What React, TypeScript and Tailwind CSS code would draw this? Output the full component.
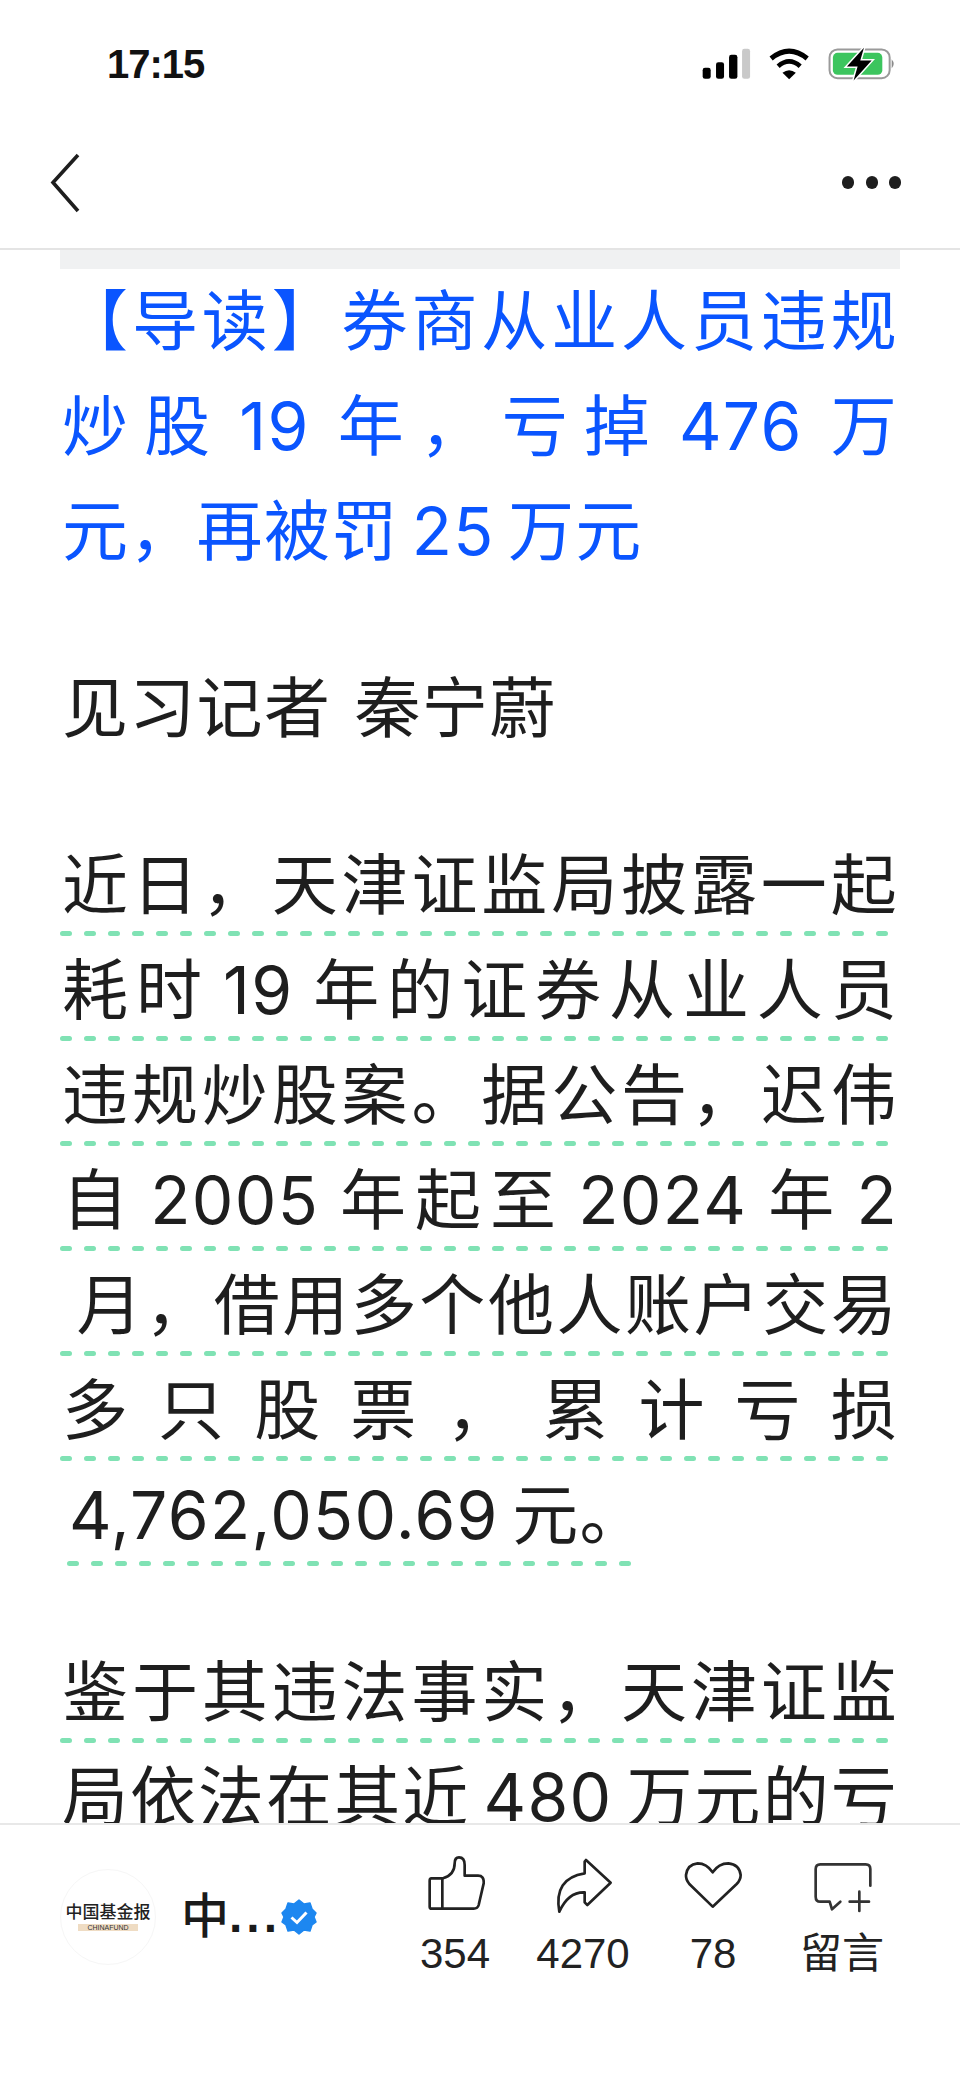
const fontStack = {
  fontFamily: '"Liberation Sans", "Noto Sans CJK SC", sans-serif',
};

type LineProps = {
  text: string;
  blue?: boolean;
  dashed?: boolean;
  last?: boolean;
  indent?: boolean;
};

function Line({ text, blue, dashed, last, indent }: LineProps) {
  return (
    <div className={indent ? "w-[570px] ml-[7px]" : last ? "w-fit" : "w-full"}>
      <div
        className={`h-[96px] font-['Inter','Noto_Sans_CJK_SC',sans-serif] text-[66px] leading-[100px] tracking-[1.3px] whitespace-nowrap ${
          blue ? "text-[#0a55ff]" : "text-[#1e1e1e]"
        } ${last ? "text-left" : "text-justify [text-align-last:justify]"}`}
      >
        {text}
      </div>
      <div className="h-[9px]">
        {dashed && (
          <svg className="block -ml-[2px] w-[calc(100%+2px)] h-[5px]">
            <line
              x1="0"
              y1="2.5"
              x2="100%"
              y2="2.5"
              stroke="#80e2b4"
              strokeWidth="5"
              strokeDasharray="7 17"
              strokeLinecap="round"
              transform="translate(2.5 0)"
            />
          </svg>
        )}
      </div>
    </div>
  );
}

function StatusIcons() {
  return (
    <svg width="197" height="37" viewBox="120 50 590 110">
      <rect x="128" y="112" width="24" height="33" rx="7" fill="#000" />
      <rect x="168" y="95" width="24" height="50" rx="7" fill="#000" />
      <rect x="207" y="73" width="25" height="72" rx="7" fill="#000" />
      <rect x="246" y="55" width="24" height="90" rx="7" fill="#c9c9c9" />
      <path d="M333 84 Q387 40 441 84" fill="none" stroke="#000" strokeWidth="15" />
      <path d="M354 107 Q387 78 420 107" fill="none" stroke="#000" strokeWidth="14" />
      <path d="M387 146 L367 127 Q387 112 407 127 Z" fill="#000" />
      <rect x="508" y="57" width="180" height="86" rx="24" fill="none" stroke="#9a9a9a" strokeWidth="6" />
      <rect x="518" y="67" width="148" height="66" rx="14" fill="#3cc55e" />
      <path d="M694 86 Q706 100 694 114 Z" fill="#8a8a8a" />
      <path
        d="M611 52 L560 108 H592 L580 150 L634 90 H600 Z"
        fill="#000"
        stroke="#fff"
        strokeWidth="9"
        paintOrder="stroke"
      />
    </svg>
  );
}

function ThumbIcon() {
  return (
    <svg width="60" height="60" viewBox="76 40 180 180" fill="none" stroke="#222" strokeWidth="8" strokeLinejoin="round">
      <path d="M130 110 H95 Q90 110 90 117 V195 Q90 201 96 201 H222 Q234 201 237 190 L252 125 Q254 102 235 102 H195 V70 Q195 47 178 47 Q165 47 165 65 Q165 100 130 110 Z" />
      <path d="M128 110 V201" />
    </svg>
  );
}

function ShareIcon() {
  return (
    <svg width="60" height="60" viewBox="459 40 180 180" fill="none" stroke="#222" strokeWidth="8" strokeLinejoin="round">
      <path d="M558 55 L632 123 L562 190 L554 182 V152 Q505 150 478 210 Q460 110 554 95 V60 Z" />
    </svg>
  );
}

function HeartIcon() {
  return (
    <svg width="60" height="60" viewBox="849 40 180 180" fill="none" stroke="#222" strokeWidth="8" strokeLinejoin="round">
      <path d="M938 195 L868 127 Q857 113 858 100 Q862 68 893 65 Q920 65 938 92 Q956 65 985 65 Q1018 68 1022 100 Q1022 115 1010 127 Z" />
    </svg>
  );
}

function CommentIcon() {
  return (
    <svg width="60" height="60" viewBox="1237 40 180 180" fill="none" stroke="#333" strokeWidth="8" strokeLinecap="round" strokeLinejoin="round">
      <path d="M1412 132 V82 Q1412 68 1398 68 H1262 Q1248 68 1248 82 V165 Q1248 180 1262 180 H1290 L1297 203 L1322 180" />
      <path d="M1379 150 V208 M1350 180 H1408" />
    </svg>
  );
}

function VerifiedBadge() {
  return (
    <svg width="36" height="36" viewBox="0 0 36 36">
      <path
        d="M18 1 L23 5 L29 4 L31 10 L35 14 L33 18 L35 23 L31 26 L29 32 L23 31 L18 35 L13 31 L7 32 L5 26 L1 23 L3 18 L1 14 L5 10 L7 4 L13 5 Z"
        fill="#1d87f0"
        stroke="#1d87f0"
        strokeWidth="1.5"
        strokeLinejoin="round"
      />
      <path d="M10.5 18.5 L16 23.5 L25.5 13.5" fill="none" stroke="#fff" strokeWidth="3" />
    </svg>
  );
}

const actions = [
  { icon: <ThumbIcon />, label: "354", center: "w-[126px]" },
  { icon: <ShareIcon />, label: "4270", center: "w-[130px]" },
  { icon: <HeartIcon />, label: "78", center: "w-[130px]" },
  { icon: <CommentIcon />, label: "留言", center: "w-[128px]" },
];

export default function App() {
  return (
    <div className="w-[960px] h-[2079px] bg-white overflow-hidden flex flex-col" style={fontStack}>
      <div className="h-[100px] shrink-0 flex justify-between pl-[107px] pr-[63px] pt-[40px]">
        <span className="text-[40px] leading-[48px] font-bold tracking-[-1px] text-[#111]">17:15</span>
        <div className="pt-[7px]">
          <StatusIcons />
        </div>
      </div>

      <div className="h-[150px] shrink-0 border-b-2 border-[#e4e4e4] flex items-start justify-between pl-[49px] pr-[59px] pt-[53px]">
        <svg width="32" height="60" viewBox="0 0 32 60" fill="none" stroke="#1e1e1e" strokeWidth="3.6">
          <path d="M29 2 L4 29.5 L29 58" />
        </svg>
        <div className="flex gap-[11.5px] pt-[23px]">
          <div className="w-[12px] h-[13px] rounded-full bg-[#1e1e1e]" />
          <div className="w-[12px] h-[13px] rounded-full bg-[#1e1e1e]" />
          <div className="w-[12px] h-[13px] rounded-full bg-[#1e1e1e]" />
        </div>
      </div>

      <div className="flex-1 min-h-0 overflow-hidden px-[62px]">
        <div className="h-[19px] bg-[#f0f1f2] -mx-[2px] mb-[2px]" />

        <Line blue text="【导读】券商从业人员违规" />
        <Line blue text={"炒股\u200919\u2009年，亏掉\u2009476\u2009万"} />
        <Line blue last text={"元，再被罚\u200925\u2009万元"} />

        <div className="h-[72px]" />
        <Line last text={"见习记者\u2004秦宁蔚"} />

        <div className="h-[72px]" />
        <Line dashed text="近日，天津证监局披露一起" />
        <Line dashed text={"耗时\u200919\u2009年的证券从业人员"} />
        <Line dashed text="违规炒股案。据公告，迟伟" />
        <Line dashed text={"自\u20092005\u2009年起至\u20092024\u2009年\u20092"} />
        <Line dashed text={"\u2009月，借用多个他人账户交易"} />
        <Line dashed text="多只股票，累计亏损" />
        <Line dashed indent last text={"4,762,050.69\u2009元。"} />

        <div className="h-[72px]" />
        <Line dashed text="鉴于其违法事实，天津证监" />
        <Line text={"局依法在其近\u2009480\u2009万元的亏"} />
      </div>

      <div className="h-[256px] shrink-0 border-t-2 border-[#e8e8e8] bg-white flex items-start pl-[60px] pt-[30px]">
        <div className="flex items-center pt-[14px]">
          <div className="w-[96px] h-[96px] rounded-full border border-[#f6f6f6] flex flex-col items-center justify-center">
            <span className="text-[17px] leading-[18px] text-[#222] font-medium whitespace-nowrap">中国基金报</span>
            <span className="mt-[2px] w-[60px] h-[7px] bg-[#efdcc3] text-[7px] leading-[7px] text-[#333] text-center">
              CHINAFUND
            </span>
          </div>
          <span className="ml-[25px] text-[48px] leading-[60px] font-medium text-[#1a1a1a]">中</span>
          <span className="text-[48px] leading-[60px] font-bold tracking-[4px] text-[#1a1a1a] mt-[-2px]">...</span>
          <div className="ml-[0px]">
            <VerifiedBadge />
          </div>
        </div>
        <div className="ml-auto mr-[54px] flex">
          {actions.map((a) => (
            <div key={a.label} className={`${a.center} flex flex-col items-center`}>
              {a.icon}
              <span className="mt-[17px] text-[42px] leading-[44px] text-[#222]">{a.label}</span>
            </div>
          ))}
        </div>
      </div>
    </div>
  );
}
